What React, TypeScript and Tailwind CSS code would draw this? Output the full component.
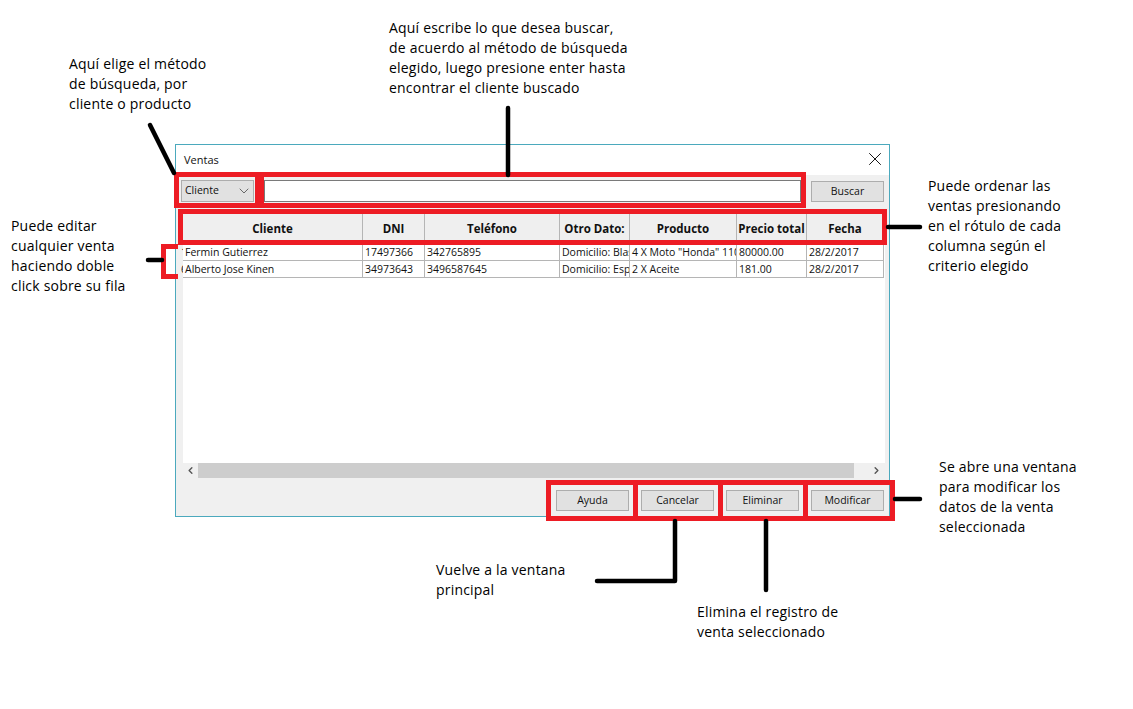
import React from 'react';
import { ChevronDown, ChevronLeft, ChevronRight, X } from 'lucide-react';

const columns = [
  { label: 'Cliente', width: 'w-[180px]' },
  { label: 'DNI', width: 'w-[62px]' },
  { label: 'Teléfono', width: 'w-[135px]' },
  { label: 'Otro Dato:', width: 'w-[70px]' },
  { label: 'Producto', width: 'w-[107px]' },
  { label: 'Precio total', width: 'w-[70px]' },
  { label: 'Fecha', width: 'w-[77px]' },
];

const rows = [
  { id: '1', cells: ['Fermin Gutierrez', '17497366', '342765895', 'Domicilio: Blas', '4 X Moto "Honda" 110', '80000.00', '28/2/2017'] },
  { id: '6', cells: ['Alberto Jose Kinen', '34973643', '3496587645', 'Domicilio: Espe', '2 X Aceite', '181.00', '28/2/2017'] },
];

const WinButton = ({ label }: { label: string }) => (
  <button className="block w-[73px] h-[21px] bg-[#e1e1e1] border border-[#adadad] text-[10.5px] text-[#111] leading-none shrink-0">
    {label}
  </button>
);

const Note = ({ className, lines }: { className: string; lines: string[] }) => (
  <div className={`absolute text-[14px] tracking-[0.2px] leading-[20px] text-black font-['Open_Sans',sans-serif] whitespace-nowrap ${className}`}>
    {lines.map(line => <div key={line}>{line}</div>)}
  </div>
);

const App: React.FC = () => {
  return (
    <div className="relative w-[1133px] h-[709px] bg-white overflow-hidden font-['Open_Sans',sans-serif]">
      {/* Ventana */}
      <div className="absolute left-[175px] top-[144px] w-[715px] h-[373px] border border-[#4ba9bd] flex flex-col bg-[#f0f0f0]">
        <div className="h-[30px] bg-white flex items-center justify-between pl-[8px] pr-[3px] shrink-0">
          <span className="text-[11px] text-[#111]">Ventas</span>
          <X className="w-[22px] h-[22px] text-black -translate-y-px" strokeWidth={1} />
        </div>

        <div className="h-[39px] shrink-0 flex items-start pt-[5px] pl-[5px]">
          <div className="w-[73px] h-[22px] bg-[#e1e1e1] border border-[#adadad] flex items-center justify-between pl-[3px] pr-[1px] text-[10.5px] text-[#111] shrink-0">
            <span>Cliente</span>
            <ChevronDown className="w-[16px] h-[16px] text-[#555]" strokeWidth={1.3} />
          </div>
          <div className="ml-[10px] w-[537px] h-[22px] bg-white border border-[#7a7a7a] shrink-0"></div>
          <div className="ml-[10px] mt-[1px] flex"><WinButton label="Buscar" /></div>
        </div>

        <div className="flex-1 flex flex-col pl-[7px] min-h-0">
          <div className="flex-1 bg-white min-h-0 mr-[4px]">
            <div className="flex h-[30px]">
              {columns.map(col => (
                <div key={col.label} className={`${col.width} shrink-0 bg-[#efefef] border-r border-b border-[#b5b5b5] flex items-center justify-center text-[11.5px] font-bold text-[#111] whitespace-nowrap`}>
                  {col.label}
                </div>
              ))}
            </div>
            {rows.map(row => (
              <div key={row.id} className="relative flex h-[17px]">
                <span className="absolute left-[-2px] top-0 w-[2px] overflow-hidden text-[10.5px] leading-[16px] text-[#111]">{row.id}</span>
                {row.cells.map((cell, i) => (
                  <div key={i} className={`${columns[i].width} shrink-0 border-r border-b border-[#b5b5b5] pl-[2px] overflow-hidden whitespace-nowrap text-[10.5px] leading-[16px] text-[#111]`}>
                    {cell}
                  </div>
                ))}
              </div>
            ))}
          </div>
          <div className="h-[15px] shrink-0 flex items-center bg-[#f0f0f0]">
            <div className="w-[15px] flex justify-center"><ChevronLeft className="w-[11px] h-[11px] text-[#555]" strokeWidth={3} /></div>
            <div className="w-[656px] h-full bg-[#cdcdcd]"></div>
            <div className="flex-1 flex justify-end pr-[7px]"><ChevronRight className="w-[11px] h-[11px] text-[#555]" strokeWidth={3} /></div>
          </div>
        </div>

        <div className="h-[38px] shrink-0 flex items-start justify-end gap-[12px] pt-[12px] pr-[5px]">
          <WinButton label="Ayuda" />
          <WinButton label="Cancelar" />
          <WinButton label="Eliminar" />
          <WinButton label="Modificar" />
        </div>
      </div>

      {/* Marcos rojos */}
      <div className="absolute left-[174px] top-[172px] w-[632px] h-[36px] border-[5px] border-[#ed1c24]"></div>
      <div className="absolute left-[255px] top-[172px] w-[9px] h-[36px] bg-[#ed1c24]"></div>
      <div className="absolute left-[178px] top-[209px] w-[709px] h-[36px] border-[5px] border-[#ed1c24]"></div>
      <div className="absolute left-[161px] top-[244px] w-[17px] h-[35px] border-[5px] border-r-0 border-[#ed1c24]"></div>
      <div className="absolute left-[546px] top-[480px] w-[349px] h-[41px] border-[5px] border-[#ed1c24] flex">
        <div className="absolute left-[82px] top-0 w-[5px] h-full bg-[#ed1c24]"></div>
        <div className="absolute left-[167px] top-0 w-[5px] h-full bg-[#ed1c24]"></div>
        <div className="absolute left-[252px] top-0 w-[5px] h-full bg-[#ed1c24]"></div>
      </div>

      {/* Flechas */}
      <svg className="absolute left-0 top-0 pointer-events-none" width="1133" height="709" fill="none" stroke="black" strokeWidth="4.5" strokeLinecap="round" strokeLinejoin="round">
        <path d="M150 125 L174 173" />
        <path d="M508 108 L508 175" />
        <path d="M148 260 L162 260" />
        <path d="M888 227 L920 227" />
        <path d="M895 499 L920 499" />
        <path d="M675 521 L675 581 L597 581" />
        <path d="M766 521 L766 590" />
      </svg>

      {/* Notas */}
      <Note className="left-[69px] top-[54px]" lines={['Aquí elige el método', 'de búsqueda, por', 'cliente o producto']} />
      <Note className="left-[389px] top-[18px]" lines={['Aquí escribe lo que desea buscar,', 'de acuerdo al método de búsqueda', 'elegido, luego presione enter hasta', 'encontrar el cliente buscado']} />
      <Note className="left-[11px] top-[216px]" lines={['Puede editar', 'cualquier venta', 'haciendo doble', 'click sobre su fila']} />
      <Note className="left-[928px] top-[176px]" lines={['Puede ordenar las', 'ventas presionando', 'en el rótulo de cada', 'columna según el', 'criterio elegido']} />
      <Note className="left-[939px] top-[457px]" lines={['Se abre una ventana', 'para modificar los', 'datos de la venta', 'seleccionada']} />
      <Note className="left-[436px] top-[560px]" lines={['Vuelve a la ventana', 'principal']} />
      <Note className="left-[697px] top-[602px]" lines={['Elimina el registro de', 'venta seleccionado']} />
    </div>
  );
};

export default App;
